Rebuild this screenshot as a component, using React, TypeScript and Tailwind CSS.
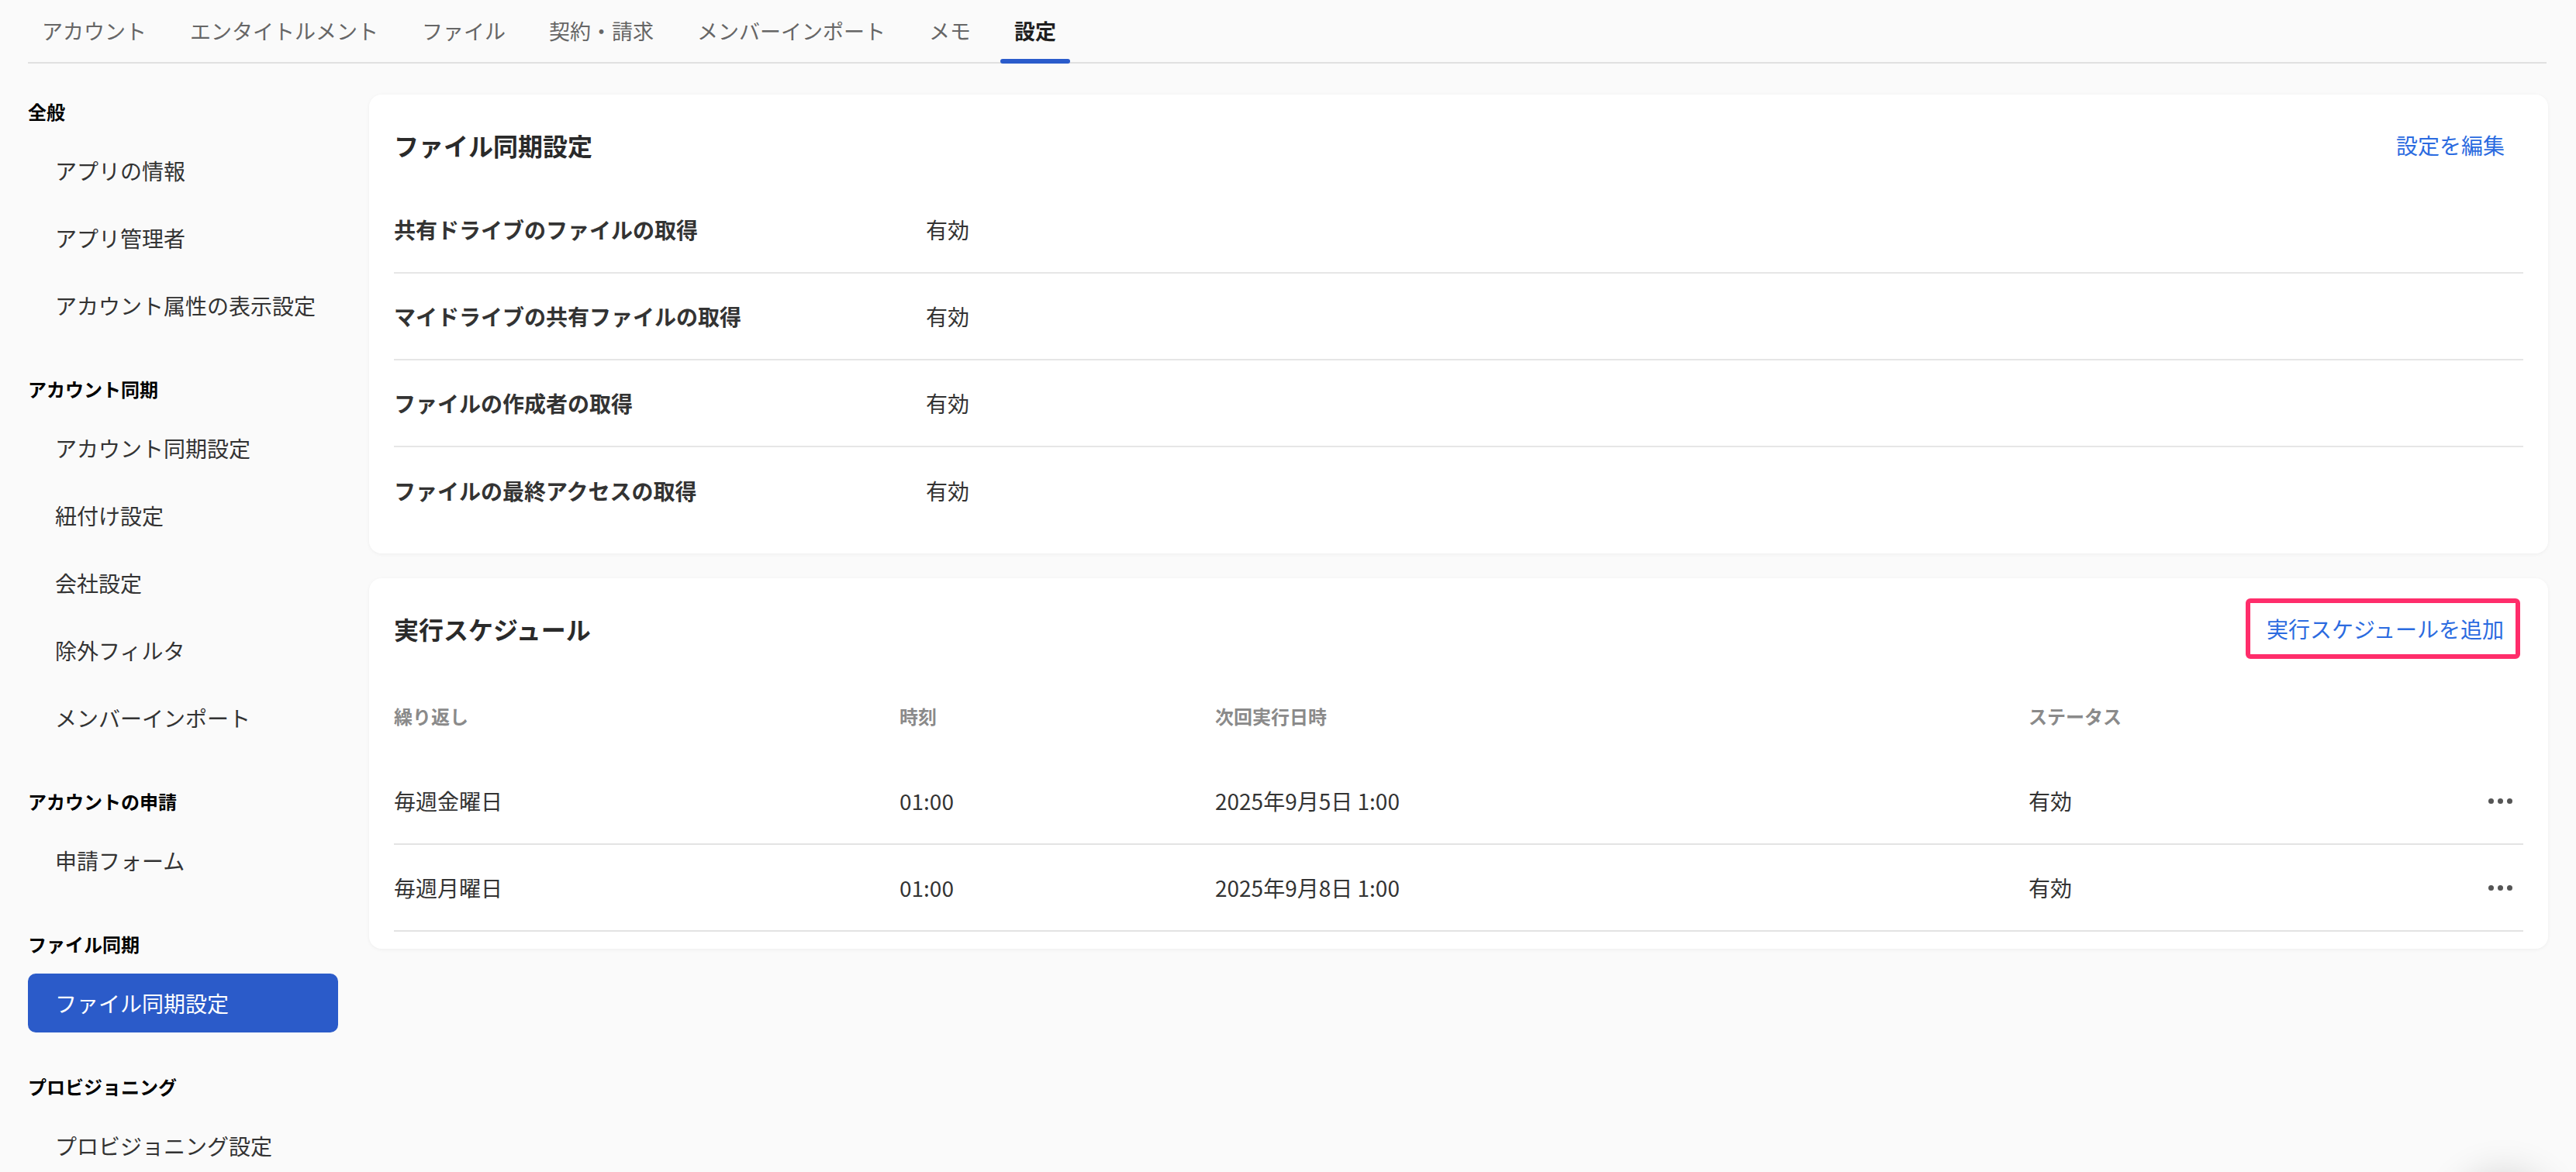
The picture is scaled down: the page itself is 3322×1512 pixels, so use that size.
import React from "react";

const tabs = ["アカウント", "エンタイトルメント", "ファイル", "契約・請求", "メンバーインポート", "メモ", "設定"];

const sections = [
  { title: "全般", items: ["アプリの情報", "アプリ管理者", "アカウント属性の表示設定"] },
  { title: "アカウント同期", items: ["アカウント同期設定", "紐付け設定", "会社設定", "除外フィルタ", "メンバーインポート"] },
  { title: "アカウントの申請", items: ["申請フォーム"] },
  { title: "ファイル同期", items: ["ファイル同期設定"] },
  { title: "プロビジョニング", items: ["プロビジョニング設定"] },
];

const syncSettings = [
  "共有ドライブのファイルの取得",
  "マイドライブの共有ファイルの取得",
  "ファイルの作成者の取得",
  "ファイルの最終アクセスの取得",
];

const schedules = [
  { repeat: "毎週金曜日", time: "01:00", next: "2025年9月5日 1:00", status: "有効" },
  { repeat: "毎週月曜日", time: "01:00", next: "2025年9月8日 1:00", status: "有効" },
];

function Dots() {
  return (
    <div className="flex items-center gap-[5px]">
      <span className="w-[7px] h-[7px] rounded-full bg-[#555]" />
      <span className="w-[7px] h-[7px] rounded-full bg-[#555]" />
      <span className="w-[7px] h-[7px] rounded-full bg-[#555]" />
    </div>
  );
}

export default function App() {
  return (
    <div
      className="relative min-h-screen w-full bg-[#fafafa] text-[#333] overflow-hidden"
      style={{ fontFamily: '"Noto Sans CJK JP", "Noto Sans", sans-serif' }}
    >
      {/* tabs */}
      <div className="ml-[36px] mr-[38px] h-[82px] border-b-2 border-[#e0e0e0] flex gap-[20px]">
        {tabs.map((t) => {
          const active = t === "設定";
          return (
            <div key={t} className="relative h-[80px] px-[18px] flex items-center">
              <span className={`text-[27px] whitespace-nowrap ${active ? "font-bold text-[#1f1f1f]" : "text-[#666]"}`}>
                {t}
              </span>
              {active && <div className="absolute left-0 right-0 bottom-[-2px] h-[6px] rounded-full bg-[#2a5bcb]" />}
            </div>
          );
        })}
      </div>

      <div className="flex">
        {/* sidebar */}
        <div className="w-[476px] pl-[36px] pt-[42px] flex flex-col gap-[50px] shrink-0">
          {sections.map((s) => (
            <div key={s.title}>
              <div className="h-[40px] flex items-center text-[24px] font-bold text-black">{s.title}</div>
              <div className="mt-[18px] flex flex-col gap-[11px]">
                {s.items.map((it) => {
                  const active = it === "ファイル同期設定";
                  return (
                    <div
                      key={it}
                      className={`w-[400px] h-[76px] rounded-[10px] px-[35px] flex items-center whitespace-nowrap text-[28px] ${active ? "bg-[#2b5bc9] text-white" : "text-[#333]"}`}
                    >
                      {it}
                    </div>
                  );
                })}
              </div>
            </div>
          ))}
        </div>

        {/* main */}
        <div className="flex-1 pt-[40px] pr-[36px] flex flex-col gap-[32px]">
          {/* card 1 */}
          <div className="bg-white rounded-[16px] shadow-[0_1px_5px_rgba(0,0,0,0.05)] px-[32px] pt-[20px] pb-[25px]">
            <div className="h-[90px] flex items-center justify-between">
              <h2 className="text-[32px] font-bold text-[#2a2a2a]">ファイル同期設定</h2>
              <button className="px-[24px] text-[28px] text-[#2b6be0]">設定を編集</button>
            </div>
            <div className="mt-[9px]">
              {syncSettings.map((s, i) => (
                <div
                  key={s}
                  className={`h-[112px] flex items-center ${i < syncSettings.length - 1 ? "border-b-2 border-[#e6e6e6]" : ""}`}
                >
                  <div className="w-[686px] text-[28px] font-bold text-[#333]">{s}</div>
                  <div className="text-[28px] text-[#333]">有効</div>
                </div>
              ))}
            </div>
          </div>

          {/* card 2 */}
          <div className="bg-white rounded-[16px] shadow-[0_1px_5px_rgba(0,0,0,0.05)] px-[32px] pt-[20px] pb-[22px]">
            <div className="h-[90px] flex items-center justify-between">
              <h2 className="text-[32px] font-bold text-[#2a2a2a]">実行スケジュール</h2>
              <div className="mr-[4px] border-[6px] border-[#ff2d6b] rounded-[6px] pl-[21px] pr-[15px] py-[12px]">
                <button className="text-[28px] text-[#2b6be0]">実行スケジュールを追加</button>
              </div>
            </div>
            <div className="mt-[14px] h-[108px] flex items-center text-[24px] font-bold text-[#8a8a8a]">
              <div className="w-[652px]">繰り返し</div>
              <div className="w-[407px]">時刻</div>
              <div className="w-[1049px]">次回実行日時</div>
              <div className="flex-1">ステータス</div>
            </div>
            {schedules.map((r) => (
              <div key={r.next} className="h-[112px] flex items-center border-b-2 border-[#e3e3e3] text-[28px] text-[#333]">
                <div className="w-[652px]">{r.repeat}</div>
                <div className="w-[407px]">{r.time}</div>
                <div className="w-[1049px]">{r.next}</div>
                <div className="flex-1">{r.status}</div>
                <div className="pr-[14px]">
                  <Dots />
                </div>
              </div>
            ))}
          </div>
        </div>
      </div>

      {/* floating button shadow peeking from bottom */}
      <div className="absolute right-[28px] bottom-[-128px] w-[130px] h-[130px] rounded-full bg-[#fafafa] shadow-[0_0_50px_rgba(0,0,0,0.16)]" />
    </div>
  );
}
